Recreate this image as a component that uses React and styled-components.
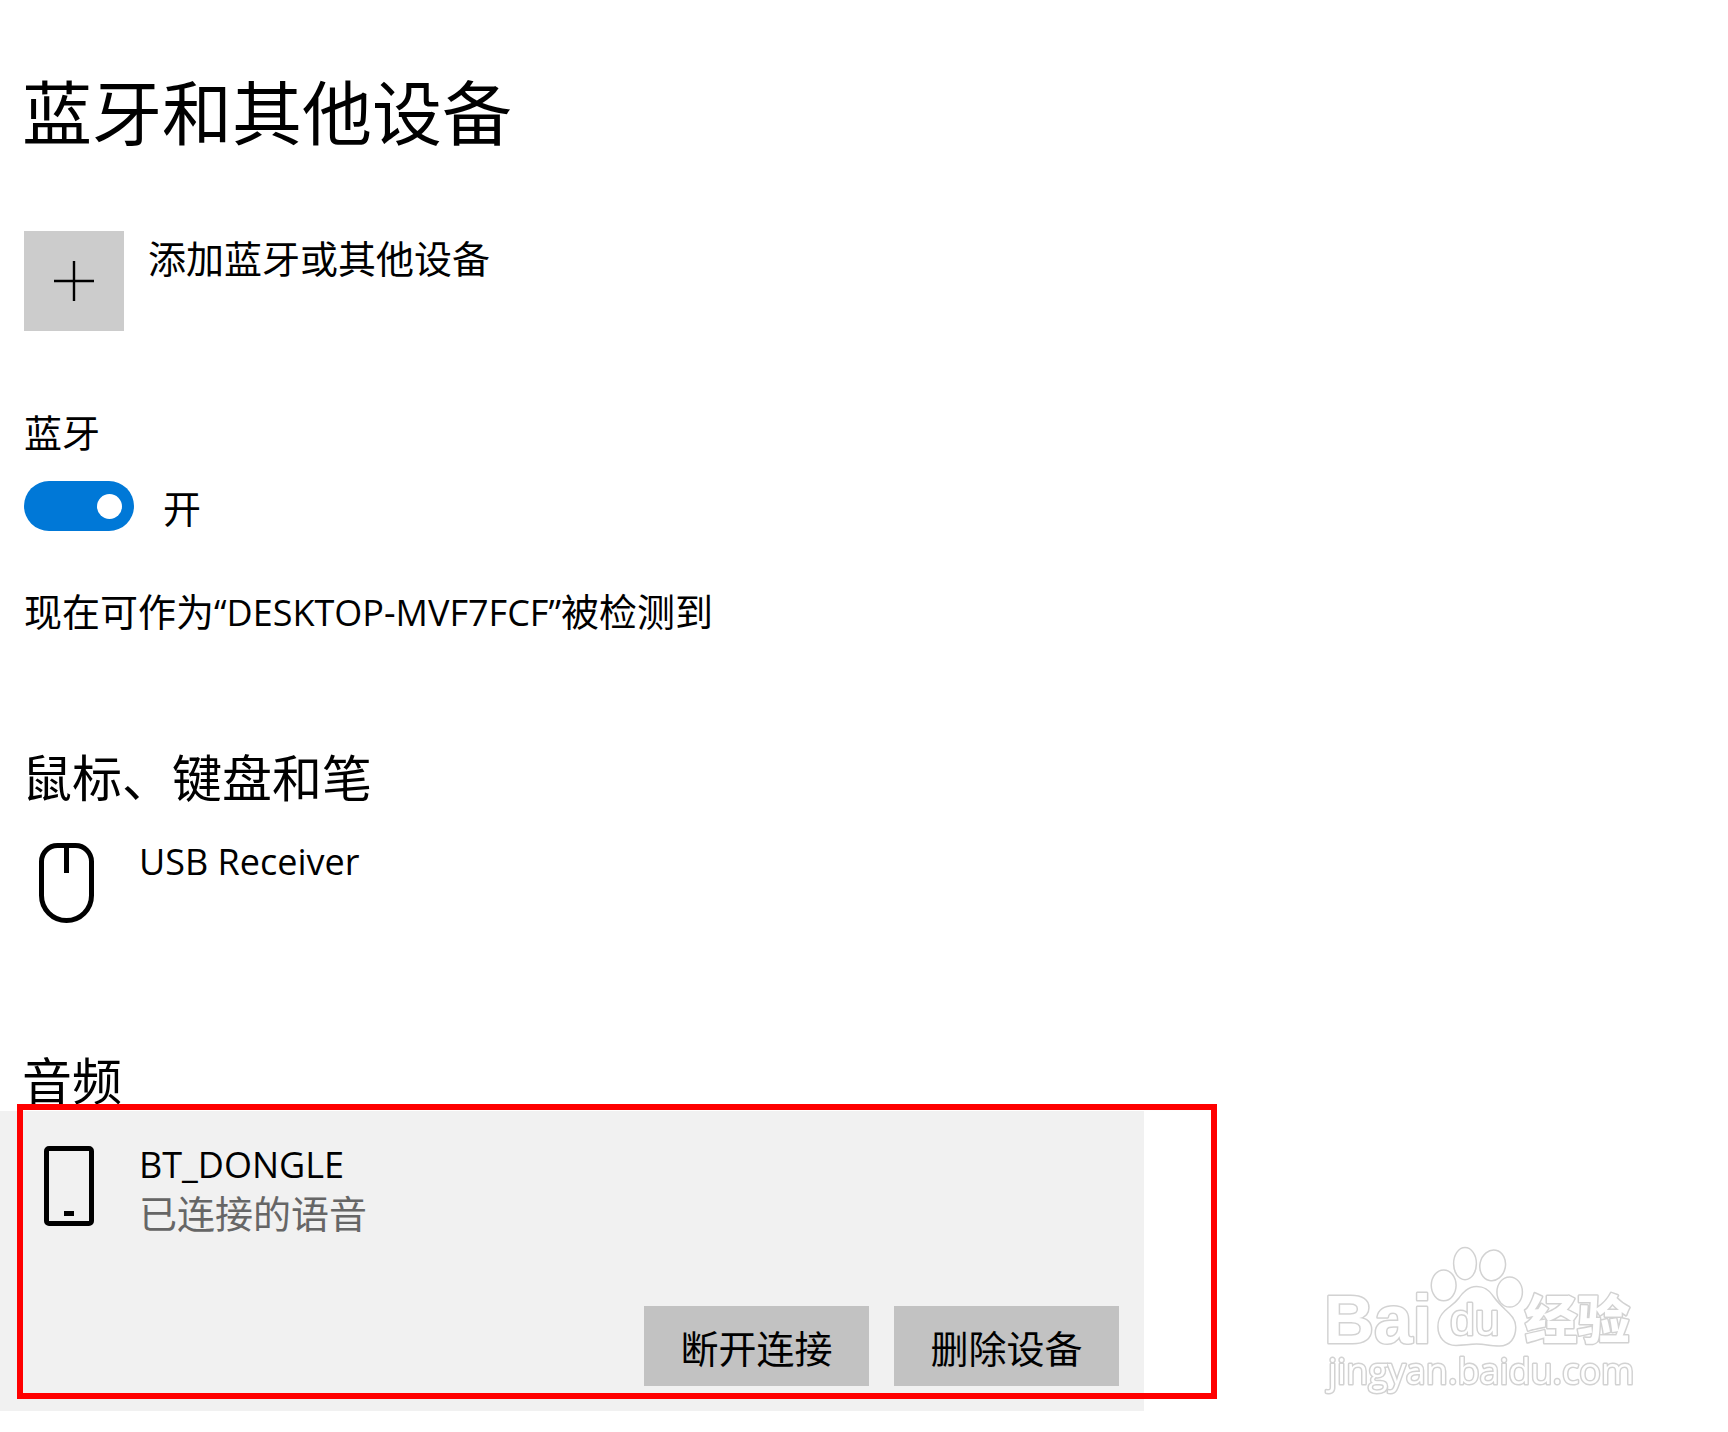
import React, { useState } from "react";
import styled, { createGlobalStyle } from "styled-components";

const GlobalStyle = createGlobalStyle`
  *, *::before, *::after { box-sizing: border-box; }
  body {
    margin: 0;
    background: #fff;
    color: #000;
    font-family: "Open Sans", "Noto Sans CJK SC", sans-serif;
    font-size: 38px;
    line-height: 56px;
  }
  button { font: inherit; color: inherit; border: 0; cursor: pointer; }
  h1, h2, p, ul { margin: 0; padding: 0; font-weight: 400; }
`;

const Page = styled.main`
  position: relative;
  min-height: 100vh;
  padding: 67px 0 21px;
`;

const Title = styled.h1`
  padding: 0 22px;
  font-size: 70px;
  line-height: 92px;
`;

const AddButton = styled.button`
  display: flex;
  align-items: flex-start;
  gap: 24px;
  margin: 72px 24px 0;
  padding: 0;
  background: none;
  line-height: 54px;
`;

const PlusTile = styled.span`
  display: grid;
  place-items: center;
  width: 100px;
  height: 100px;
  background: #ccc;
`;

const RadioSection = styled.section`
  display: flex;
  flex-direction: column;
  padding: 73px 24px 0;
`;

const SwitchRow = styled.div`
  display: flex;
  align-items: flex-start;
  gap: 29px;
  margin: 21px 0 48px;
  line-height: 54px;
`;

const Switch = styled.input`
  appearance: none;
  display: flex;
  align-items: center;
  justify-content: ${(p) => (p.checked ? "flex-end" : "flex-start")};
  width: 110px;
  height: 50px;
  margin: 0;
  padding: 0 12px;
  border-radius: 25px;
  background: ${(p) => (p.checked ? "#0078d7" : "#999")};
  cursor: pointer;

  &::before {
    content: "";
    width: 25px;
    height: 25px;
    border-radius: 50%;
    background: #fff;
  }
`;

const Latin = styled.span`
  font-size: 36px;
  line-height: 1;
`;

const Section = styled.section`
  margin-top: ${(p) => p.$gap}px;
`;

const SectionTitle = styled.h2`
  padding: 0 22px;
  font-size: 50px;
  line-height: 60px;
`;

const DeviceCard = styled.article`
  position: relative;
  display: flex;
  flex-direction: column;
  gap: 68px;
  max-width: 1144px;
  padding: 27px 25px 25px 24px;
  background: ${(p) => (p.$selected ? "#f1f1f1" : "transparent")};
`;

const DeviceRow = styled.div`
  display: flex;
  gap: 45px;
`;

const IconCell = styled.span`
  display: flex;
  justify-content: flex-end;
  width: 70px;
  padding-top: 8px;

  svg { display: block; }
`;

const DeviceText = styled.div`
  line-height: 50px;
`;

const Status = styled.p`
  color: #666;
`;

const Actions = styled.div`
  display: flex;
  justify-content: flex-end;
  gap: 25px;
`;

const ActionButton = styled.button`
  width: 225px;
  height: 80px;
  padding: 4px 0 0;
  background: #c2c2c2;
`;

const Highlight = styled.div`
  position: absolute;
  inset: -7px -73px 12px 17px;
  border: 6px solid #f00;
  pointer-events: none;
`;

const Watermark = styled.svg`
  position: absolute;
  right: 88px;
  bottom: 32px;
  width: 320px;
  height: 160px;
  fill: #fff;
  stroke: #d2d2d2;
  stroke-width: 9px;
  paint-order: stroke;
  stroke-linejoin: round;
  filter: blur(0.6px);
`;

const LogoText = styled.text`
  font-family: "Liberation Sans", Arial, sans-serif;
  font-weight: ${(p) => p.$weight || 400};
  font-size: ${(p) => p.$size}px;
`;

const LogoHan = styled.text`
  font-family: "Noto Sans CJK SC", sans-serif;
  font-weight: 900;
  font-size: 158px;
`;

const LogoUrl = styled.text`
  font-family: "Open Sans", sans-serif;
  font-weight: 400;
  font-size: 108px;
`;

function PlusIcon() {
  return (
    <svg width="40" height="40" viewBox="0 0 40 40" stroke="#000" strokeWidth="2.4" aria-hidden="true">
      <path d="M20 0V40M0 20H40" />
    </svg>
  );
}

function MouseIcon() {
  return (
    <svg width="55" height="80" viewBox="0 0 55 80" fill="none" stroke="#000" strokeWidth="5" aria-hidden="true">
      <path d="M18.500 2.500H36.500A16 16 0 0 1 52.500 18.500V52.500A25 25 0 0 1 2.500 52.500V18.500A16 16 0 0 1 18.500 2.500ZM27.500 2.500V30" />
    </svg>
  );
}

function PhoneIcon() {
  return (
    <svg width="50" height="80" viewBox="0 0 50 80" aria-hidden="true">
      <rect x="2.500" y="2.500" width="45" height="75" rx="2.500" fill="none" stroke="#000" strokeWidth="5" />
      <rect x="20" y="65" width="10" height="5" />
    </svg>
  );
}

function BaiduMark() {
  return (
    <Watermark viewBox="60 60 960 480" role="img" aria-label="Baidu 经验">
      <LogoText x="72" y="370" $size={208} $weight={700}>Bai</LogoText>
      <ellipse cx="431" cy="196" rx="35" ry="44" />
      <ellipse cx="495" cy="131" rx="32" ry="46" />
      <ellipse cx="578" cy="136" rx="36" ry="44" transform="rotate(12 578 136)" />
      <ellipse cx="629" cy="216" rx="36" ry="43" />
      <path d="M530 202C505 202 490 220 478 236C464 254 448 262 436 274C422 288 416 302 416 320C416 350 436 374 468 374C492 374 508 370 530 370C552 370 572 376 598 376C630 376 645 352 645 322C645 300 632 286 614 270C600 256 588 244 578 230C566 212 552 202 530 202Z" />
      <LogoText x="450" y="346" $size={134}>du</LogoText>
      <LogoHan x="674" y="356">经验</LogoHan>
      <LogoUrl x="84" y="491">jingyan.baidu.com</LogoUrl>
    </Watermark>
  );
}

function Device({ icon, name, status, selected, children }) {
  return (
    <DeviceCard $selected={selected}>
      <DeviceRow>
        <IconCell>{icon}</IconCell>
        <DeviceText>
          <p><Latin>{name}</Latin></p>
          {status && <Status>{status}</Status>}
        </DeviceText>
      </DeviceRow>
      {children}
    </DeviceCard>
  );
}

export default function App() {
  const [on, setOn] = useState(true);
  return (
    <>
      <GlobalStyle />
      <Page>
        <Title>蓝牙和其他设备</Title>
        <AddButton type="button">
          <PlusTile><PlusIcon /></PlusTile>
          <span>添加蓝牙或其他设备</span>
        </AddButton>
        <RadioSection>
          <label htmlFor="bluetooth">蓝牙</label>
          <SwitchRow>
            <Switch id="bluetooth" type="checkbox" role="switch" checked={on} onChange={(e) => setOn(e.target.checked)} />
            <span>{on ? "开" : "关"}</span>
          </SwitchRow>
          <p>现在可作为<Latin>“DESKTOP-MVF7FCF”</Latin>被检测到</p>
        </RadioSection>
        <Section $gap={109}>
          <SectionTitle>鼠标、键盘和笔</SectionTitle>
          <Device icon={<MouseIcon />} name="USB Receiver" />
        </Section>
        <Section $gap={103}>
          <SectionTitle>音频</SectionTitle>
          <Device icon={<PhoneIcon />} name="BT_DONGLE" status="已连接的语音" selected>
            <Actions>
              <ActionButton type="button">断开连接</ActionButton>
              <ActionButton type="button">删除设备</ActionButton>
            </Actions>
            <Highlight />
          </Device>
        </Section>
        <BaiduMark />
      </Page>
    </>
  );
}
